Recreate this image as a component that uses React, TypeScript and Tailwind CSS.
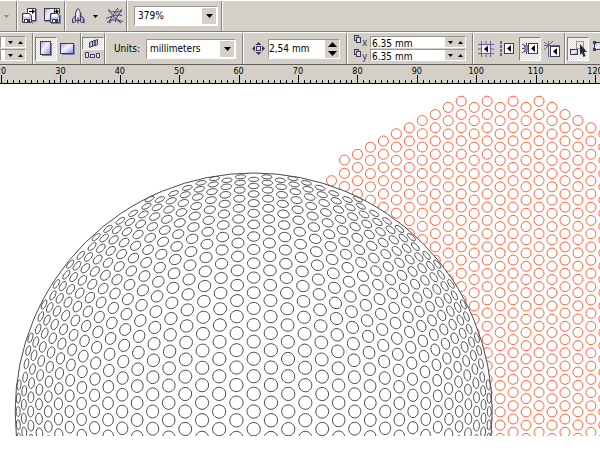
import type { ReactNode } from "react";
import clsx from "clsx";

const NAVY = "#3c3c5c";
const LILAC = "#8080b8";

// distance from the sphere centre, indexed by column number in the flat grid
const BULGE = [
  0, 17.3, 34.6, 51.7, 68.6, 85.1, 101.2, 116.7, 131.7, 145.8, 159.4, 172.3,
  184.4, 195.4, 205.7, 214.9, 223.2, 230.2, 235.7, 240.5,
];
const PITCH = 12.97;
const ROW = 1.0208;
const CX = 253.7;
const CY = 327.5;
const RADIUS = 238.5;
const CANVAS_H = 352;

function bulge(r: number) {
  const i = Math.min(Math.floor(r), BULGE.length - 2);
  const t = Math.min(r - i, 1);
  return BULGE[i] + (BULGE[i + 1] - BULGE[i]) * t;
}

function project(x: number, y: number) {
  const r = Math.hypot(x, y);
  if (r === 0) return [CX, CY];
  const k = bulge(r) / r;
  return [CX + x * k, CY + y * k];
}

function spherePath() {
  let d = "";
  for (let col = -18; col <= 18; col++) {
    const shift = col % 2 === 0 ? 0 : 0.5;
    for (let row = -19; row <= 3; row++) {
      const x = col;
      const y = (row + shift) * ROW;
      if (Math.hypot(x, y) > 18.2) continue;
      const points: string[] = [];
      for (let i = 0; i < 20; i++) {
        const a = (i / 20) * Math.PI * 2;
        const [px, py] = project(x + Math.cos(a) * 0.385, y + Math.sin(a) * 0.385);
        points.push(`${px.toFixed(2)} ${py.toFixed(2)}`);
      }
      d += `M${points.join("L")}Z`;
    }
  }
  return d;
}

// first circle of every flat column, left to right
const COLUMN_TOPS = [
  96.7, 76, 70.3, 63.2, 57, 49.8, 43.8, 36.5, 30.5, 23.4, 17.2, 23.4, 17.2,
  23.4, 17.2, 23.4, 17.2, 23.4, 30.5, 36.5, 43.8, 49.8,
];

function flatDots() {
  const dots: { x: number; y: number }[] = [];
  COLUMN_TOPS.forEach((top, i) => {
    for (let y = top; y < CANVAS_H + 6; y += 13.24) {
      dots.push({ x: 331.5 + i * PITCH, y });
    }
  });
  return dots;
}

const SPHERE = spherePath();
const DOTS = flatDots();

function Canvas() {
  return (
    <main className="overflow-hidden bg-white">
      <svg width="600" height={CANVAS_H} className="block" aria-label="Drawing">
        <g fill="none" stroke="#ff6038" strokeWidth="1">
          {DOTS.map((dot) => (
            <circle key={`${dot.x}-${dot.y}`} cx={dot.x} cy={dot.y} r="5" />
          ))}
        </g>
        <circle cx={CX} cy={CY} r={RADIUS} fill="#fff" stroke="#4a4a4a" />
        <path d={SPHERE} fill="none" stroke="#4a4a4a" strokeWidth="1" />
      </svg>
    </main>
  );
}

function Ruler() {
  const ticks = Array.from({ length: 102 }, (_, i) => i);
  return (
    <div className="overflow-hidden border-b border-black bg-[#d4d0c8]">
      <svg width="600" height="18" className="block" aria-label="Ruler">
        {ticks.map((i) => (
          <rect
            key={i}
            x={Math.round(1 + i * 5.94)}
            y={i % 10 === 0 ? 10 : 15}
            width="1"
            height={i % 10 === 0 ? 8 : 3}
          />
        ))}
        {ticks
          .filter((i) => i % 10 === 0)
          .map((i) => (
            <text key={i} x={1 + i * 5.94} y="9" fontSize="9" textAnchor="middle">
              {20 + i}
            </text>
          ))}
      </svg>
    </div>
  );
}

function Sep({ className }: { className?: string }) {
  return (
    <div
      className={clsx(
        "w-[2px] shrink-0 self-stretch border-l border-r border-l-[#808080] border-r-white",
        className,
      )}
    />
  );
}

function Arrow({ up, big }: { up?: boolean; big?: boolean }) {
  const w = big ? 9 : 5;
  const h = big ? 5 : 3;
  return (
    <svg width={w} height={h} className="block shrink-0">
      <path
        d={up ? `M0 ${h}L${w / 2} 0L${w} ${h}Z` : `M0 0H${w}L${w / 2} ${h}Z`}
        fill="currentColor"
      />
    </svg>
  );
}

function IconButton({
  label,
  pressed,
  className,
  children,
}: {
  label: string;
  pressed?: boolean;
  className?: string;
  children: ReactNode;
}) {
  return (
    <button
      aria-label={label}
      className={clsx(
        "flex shrink-0 items-center justify-center",
        pressed &&
          "border border-t-[#808080] border-r-white border-b-white border-l-[#808080] bg-[repeating-conic-gradient(#ffffff_0_25%,#dedbd5_0_50%)] bg-[length:2px_2px]",
        className,
      )}
    >
      {children}
    </button>
  );
}

function Combo({
  id,
  label,
  value,
  className,
}: {
  id: string;
  label?: string;
  value: string;
  className?: string;
}) {
  return (
    <div
      className={clsx(
        "relative h-5 shrink-0 border border-t-[#9a968e] border-r-white border-b-white border-l-[#9a968e] bg-white",
        className,
      )}
    >
      <select
        id={id}
        aria-label={label}
        defaultValue={value}
        className="h-full w-full appearance-none pl-[3px] leading-none outline-none"
      >
        <option>{value}</option>
      </select>
      <span className="pointer-events-none absolute inset-y-px right-px flex w-[14px] items-center justify-center bg-[#d4d0c8]">
        <svg width="7" height="4">
          <path d="M0 0H7L3.5 4Z" />
        </svg>
      </span>
    </div>
  );
}

function Spin({
  label,
  value,
  className,
}: {
  label: string;
  value?: string;
  className?: string;
}) {
  return (
    <div
      className={clsx(
        "flex h-3 shrink-0 overflow-hidden border border-t-[#9a968e] border-r-white border-b-white border-l-[#9a968e] bg-white",
        className,
      )}
    >
      <input
        aria-label={label}
        defaultValue={value}
        className="h-[14px] w-0 min-w-0 flex-1 pl-px leading-[14px] outline-none"
      />
      <button
        aria-label={`${label} down`}
        className="flex w-[10px] shrink-0 items-center justify-center bg-[#d4d0c8]"
      >
        <Arrow />
      </button>
      <button
        aria-label={`${label} up`}
        className="flex w-[10px] shrink-0 items-center justify-center bg-[#d4d0c8]"
      >
        <Arrow up />
      </button>
    </div>
  );
}

function Gradients() {
  return (
    <svg width="0" height="0" className="absolute">
      <linearGradient id="pane" x1="0" y1="0" x2="1" y2="1">
        <stop offset="0" stopColor="#a6a6d4" />
        <stop offset="0.45" stopColor="#f4f4ff" />
        <stop offset="1" stopColor="#8c8cc4" />
      </linearGradient>
    </svg>
  );
}

function Floppy({ x, y }: { x: number; y: number }) {
  return (
    <g transform={`translate(${x} ${y})`}>
      <path d="M.5 .5H7.5L9.5 2.5V9.5H.5Z" fill="#c4c4e0" stroke={NAVY} />
      <rect x="2" y="1" width="5" height="3" fill="#fff" stroke="none" />
      <rect x="2" y="6" width="6" height="3" fill={NAVY} />
      <rect x="3" y="7" width="2" height="2" fill="#fff" />
    </g>
  );
}

function ImportIcon() {
  return (
    <svg width="16" height="16" fill="none">
      <path d="M5.5 6V.5H13.5V12.5H10" fill="#fff" stroke={NAVY} />
      <path d="M7 3.5H12" stroke="#000" />
      <path d="M10 1L13 3.5L10 6Z" fill="#000" />
      <path d="M14.5 1V13.5H10.5V16" stroke={LILAC} />
      <Floppy x={0} y={5} />
    </svg>
  );
}

function ExportIcon() {
  return (
    <svg width="17" height="16" fill="none">
      <rect x=".5" y=".5" width="10" height="12" fill="url(#pane)" stroke={NAVY} />
      <path d="M11 .5H15.5V6" fill="#fff" stroke={NAVY} />
      <path d="M10 3.5H13" stroke="#000" />
      <path d="M12 1L15 3.5L12 6Z" fill="#000" />
      <path d="M1 13.5H7M7 15.5H16.5V7" stroke={LILAC} />
      <Floppy x={6} y={5} />
    </svg>
  );
}

function RocketIcon() {
  return (
    <svg width="16" height="16" fill="none" stroke={NAVY}>
      <path
        d="M4.5 7.5L1.5 11V14.5H3.5L5.5 12.5M9.5 7.5L12.5 11V14.5H10.5L8.5 12.5"
        fill="#b8b8dc"
      />
      <path
        d="M7 .5C5 2.5 4.5 4.5 4.5 7V12.5H9.5V7C9.5 4.5 9 2.5 7 .5Z"
        fill="url(#pane)"
      />
      <path d="M7 9.5V15.5" />
      <path d="M10.5 5V7.5L13.5 11V15.5" stroke={LILAC} />
    </svg>
  );
}

function MeshIcon() {
  return (
    <svg width="18" height="16" fill="none">
      <path
        d="M2 2.5C4 5 7 3 10 4C13 5 15 2 16 1.5M0 10.5C4 9 9 6 16 7.5M1 14.5C5 11 9 11 17 13.5M3 1C4 6 9 9 15 15M12 0C9 4 5 9 3 15M16 2C13 6 10 10 9 14"
        stroke={NAVY}
      />
      <path d="M4 3C6 8 10 11 14 15.5M13 1C11 5 7 10 4 15.5" stroke={LILAC} />
    </svg>
  );
}

function PageIcon({ landscape }: { landscape?: boolean }) {
  const w = landscape ? 13 : 10;
  const h = landscape ? 10 : 13;
  return (
    <svg width={w + 2} height={h + 2} fill="none">
      <path d={`M2 ${h + 1.5}H${w + 1.5}V2`} stroke={LILAC} />
      <rect x=".5" y=".5" width={w} height={h} fill="url(#pane)" stroke={NAVY} />
    </svg>
  );
}

function NudgeIcon() {
  return (
    <svg width="13" height="13">
      <rect x="4.5" y="4.5" width="4" height="4" fill="#d8d8f0" stroke={NAVY} />
      <path
        d="M6.5 0L9.5 3H3.5ZM6.5 13L9.5 10H3.5ZM0 6.5L3 3.5V9.5ZM13 6.5L10 3.5V9.5Z"
        fill={NAVY}
      />
    </svg>
  );
}

function DuplicateIcon({ axis }: { axis: "x" | "y" }) {
  return (
    <span className="flex h-[14px] items-start">
      <svg width="8" height="9" className="block shrink-0">
        <rect x=".5" y=".5" width="4" height="5" fill="#c4c4e4" stroke={NAVY} />
        <rect x="2.5" y="2.5" width="4" height="5" fill="#d8d8f0" stroke={NAVY} />
      </svg>
      <span className="w-[6px] pt-[3px] leading-[10px] text-[#3c3c5c]">{axis}</span>
    </span>
  );
}

function SnapBox({ x, y }: { x: number; y: number }) {
  return (
    <g transform={`translate(${x} ${y})`}>
      <rect x=".5" y=".5" width="9" height="10" fill="#fff" stroke={NAVY} />
      <path d="M7 2V9L3 5.5Z" fill="#000" />
    </g>
  );
}

function SnapGridIcon() {
  return (
    <svg width="16" height="16">
      <path
        d="M3.5 0V16M12.5 0V16M8 0V3M8 13V16M0 3.5H16M0 12.5H16M0 8H3M13 8H16"
        stroke="#6464a0"
      />
      <rect x="4" y="4" width="8" height="8" fill="#f4f4f8" />
      <path d="M10 4.5V11.5L6 8Z" fill="#000" />
    </svg>
  );
}

function SnapGuideIcon() {
  return (
    <svg width="14" height="15">
      <path d="M1 0V15" stroke="#6464a0" strokeWidth="2" strokeDasharray="3 1" />
      <SnapBox x={4} y={2} />
    </svg>
  );
}

function SnapObjectIcon() {
  return (
    <svg width="17" height="13">
      <rect x="2" y="3" width="4" height="7" fill="#8080b4" />
      <path d="M0 2L3 4M0 11L3 9M0 6.5H2M4.5 1V3M4.5 10V12" stroke={NAVY} />
      <SnapBox x={6} y={1} />
    </svg>
  );
}

function SnapDynamicIcon() {
  return (
    <svg width="17" height="16">
      <path d="M0 4.5H16M4.5 0V16M0 9L9 0M0 1L5 5" stroke="#6464a0" />
      <SnapBox x={6} y={5} />
    </svg>
  );
}

function TreatAsFilledIcon() {
  return (
    <svg width="17" height="16" className="shrink-0">
      <path d="M6.5 .5H13.5V7.5H6.5Z" fill="none" stroke={NAVY} strokeDasharray="1 1" />
      <rect x=".5" y="8.5" width="7" height="5" fill="url(#pane)" stroke={NAVY} />
      <path d="M10 3V14L12 12L13.5 16L15.5 15L14 11H17Z" fill="#28283c" />
    </svg>
  );
}

function PagesIcon() {
  return (
    <svg width="9" height="9">
      <path
        d="M.5 3.5L3.5 2V7L.5 8.5ZM3.5 2.5L6 1V6L3.5 7.5ZM6 1.5L8.5 .5V5.5L6 7Z"
        fill="#c4c4e4"
        stroke={NAVY}
      />
    </svg>
  );
}

function PageRowIcon() {
  return (
    <svg width="16" height="7" fill="#e4e4f4" stroke={NAVY}>
      <path d="M.5 .5H3.5V5.5H.5ZM5.5 2.5H9.5V5.5H5.5ZM11.5 1.5H14.5V5.5H11.5Z" />
    </svg>
  );
}

function StandardBar() {
  return (
    <div className="flex h-8 items-center border-t border-b border-t-white border-b-[#808080]">
      <button aria-label="Redo list" className="ml-1 shrink-0 text-[#8c8880]">
        <Arrow />
      </button>
      <Sep className="ml-[7px]" />
      <IconButton label="Import" className="ml-1">
        <ImportIcon />
      </IconButton>
      <IconButton label="Export" className="ml-[6px]">
        <ExportIcon />
      </IconButton>
      <Sep className="ml-[3px]" />
      <IconButton label="Application launcher" className="ml-[5px]">
        <RocketIcon />
      </IconButton>
      <button aria-label="Launcher list" className="ml-[6px] shrink-0">
        <Arrow />
      </button>
      <IconButton label="Community" className="ml-2">
        <MeshIcon />
      </IconButton>
      <Sep className="ml-[2px]" />
      <Combo
        id="zoom"
        label="Zoom level"
        value="379%"
        className="ml-[6px] w-[84px]"
      />
      <Sep className="ml-[3px]" />
    </div>
  );
}

function PropertyBar() {
  return (
    <div className="flex h-[33px] items-center border-t border-b border-t-white border-b-[#606060]">
      <div className="flex flex-col gap-px">
        <Spin label="Paper width" className="w-[26px]" />
        <Spin label="Paper height" className="w-[26px]" />
      </div>
      <Sep className="ml-[6px]" />
      <IconButton label="Portrait" pressed className="ml-px h-6 w-[22px]">
        <PageIcon />
      </IconButton>
      <IconButton label="Landscape" className="ml-[3px]">
        <PageIcon landscape />
      </IconButton>
      <Sep className="ml-[5px]" />
      <div className="flex flex-col items-center">
        <IconButton label="All pages" pressed className="h-[13px] w-[22px]">
          <PagesIcon />
        </IconButton>
        <IconButton label="Current page" className="h-[11px] w-[22px]">
          <PageRowIcon />
        </IconButton>
      </div>
      <Sep />
      <label htmlFor="units" className="ml-2 w-8 shrink-0">
        Units:
      </label>
      <Combo id="units" value="millimeters" className="w-[90px]" />
      <Sep className="ml-[6px]" />
      <span className="ml-2 shrink-0">
        <NudgeIcon />
      </span>
      <div className="ml-[3px] flex h-5 w-[72px] shrink-0 border border-t-[#9a968e] border-r-white border-b-white border-l-[#9a968e] bg-white">
        <input
          aria-label="Nudge offset"
          defaultValue="2,54 mm"
          className="w-0 min-w-0 flex-1 outline-none"
        />
        <div className="flex w-[14px] flex-col bg-[#d4d0c8]">
          <button aria-label="Nudge up" className="flex flex-1 items-center justify-center">
            <Arrow up big />
          </button>
          <button aria-label="Nudge down" className="flex flex-1 items-center justify-center">
            <Arrow big />
          </button>
        </div>
      </div>
      <Sep className="ml-[6px]" />
      <div className="ml-[6px] flex shrink-0 flex-col">
        <DuplicateIcon axis="x" />
        <DuplicateIcon axis="y" />
      </div>
      <div className="ml-[2px] flex flex-col gap-px">
        <Spin label="Duplicate x" value="6.35 mm" className="w-24" />
        <Spin label="Duplicate y" value="6.35 mm" className="w-24" />
      </div>
      <Sep className="ml-[6px]" />
      <IconButton label="Snap to grid" className="ml-1">
        <SnapGridIcon />
      </IconButton>
      <IconButton label="Snap to guidelines" className="ml-[6px]">
        <SnapGuideIcon />
      </IconButton>
      <IconButton label="Snap to objects" pressed className="ml-[5px] h-6 w-[22px]">
        <SnapObjectIcon />
      </IconButton>
      <IconButton label="Dynamic guides" className="ml-[3px]">
        <SnapDynamicIcon />
      </IconButton>
      <Sep className="ml-[3px]" />
      <IconButton label="Treat as filled" pressed className="ml-px h-6 w-[22px]">
        <TreatAsFilledIcon />
      </IconButton>
      <IconButton label="Options" className="ml-1">
        <svg width="14" height="15">
          <rect x="1.5" y="1.5" width="11" height="7" fill="url(#pane)" stroke={NAVY} />
          <path d="M0 0H3V3H0ZM0 7H3V10H0Z" fill={NAVY} />
        </svg>
      </IconButton>
    </div>
  );
}

export default function App() {
  return (
    <div className="min-h-screen overflow-hidden bg-white font-['DejaVu_Sans_Condensed','DejaVu_Sans',sans-serif] text-[10px] leading-[14px] text-black">
      <Gradients />
      <header className="bg-[#d4d0c8]">
        <StandardBar />
        <PropertyBar />
      </header>
      <Ruler />
      <Canvas />
    </div>
  );
}
